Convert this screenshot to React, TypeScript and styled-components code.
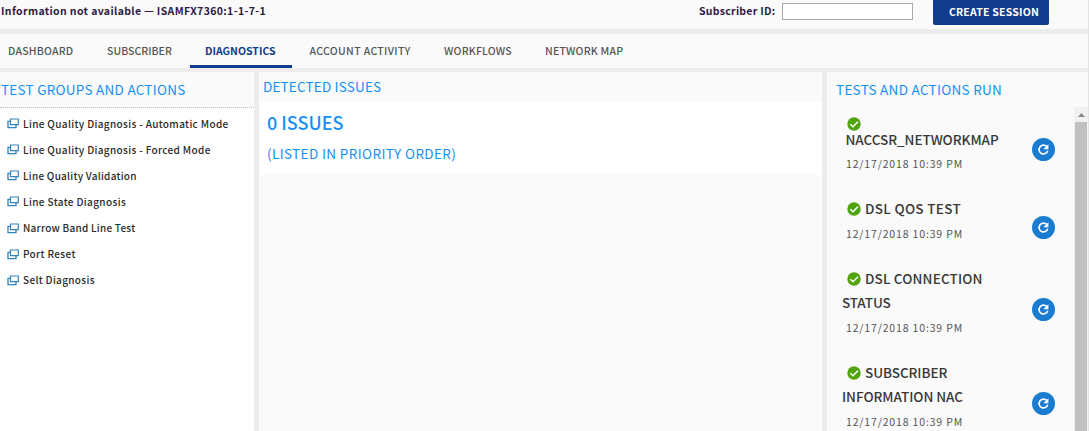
import React from "react";
import styled, { createGlobalStyle, css } from "styled-components";

const FONT = `"Noto Sans CJK SC", "Noto Sans", sans-serif`;

const GlobalStyle = createGlobalStyle`
  * { box-sizing: border-box; }
  html, body { margin: 0; height: 100%; overflow: hidden; }
  body {
    background: #ececec;
    font-family: ${FONT};
    white-space: nowrap;
  }
`;

const Page = styled.div`
  display: flex;
  flex-direction: column;
  width: 1089px;
  height: 431px;
  overflow: hidden;
  background: #ececec;
  border-right: 1px solid #e4e4e4;
`;

const TopBar = styled.header`
  display: flex;
  flex: none;
  height: 29px;
  margin-bottom: 5px;
  background: #fafafa;
`;

const barText = css`
  color: #2e1a47;
  font-size: 10.5px;
  font-weight: 700;
  line-height: 16px;
  margin-top: 3px;
`;

const LineInfo = styled.div`
  ${barText}
  width: 699px;
  padding-left: 1px;
  letter-spacing: 0.36px;
`;

const FieldLabel = styled.label`
  ${barText}
  width: 83px;
  letter-spacing: 0.27px;
`;

const Field = styled.input`
  width: 131px;
  height: 17px;
  margin: 3px 20px 0 0;
  padding: 0 4px;
  border: 1px solid #a9a9a9;
  background: #fff;
`;

const SessionButton = styled.button`
  width: 116px;
  height: 25px;
  padding: 0 0 1px 6px;
  border: 0;
  border-radius: 0 0 2px 2px;
  background: #113b8d;
  color: #fff;
  font: 700 10.5px/24px ${FONT};
  letter-spacing: 0.22px;
`;

const Tabs = styled.nav`
  display: flex;
  flex: none;
  height: 34px;
  margin-bottom: 4px;
  background: #fafafa;
`;

const Tab = styled.a<{ $width: number; $left: number; $spacing: number; $active?: boolean }>`
  width: ${(p) => p.$width}px;
  height: 34px;
  padding: 9px 0 0 ${(p) => p.$left}px;
  border-bottom: 3px solid ${(p) => (p.$active ? "#113b8d" : "transparent")};
  color: ${(p) => (p.$active ? "#113b8d" : "#555")};
  font-size: 10.5px;
  font-weight: ${(p) => (p.$active ? 700 : 500)};
  line-height: 16px;
  letter-spacing: ${(p) => p.$spacing}px;
`;

const Columns = styled.main`
  display: flex;
  flex: 1;
  gap: 5px;
  min-height: 0;
`;

const Panel = styled.section<{ $width: number; $white?: boolean }>`
  display: flex;
  flex-direction: column;
  flex: none;
  width: ${(p) => p.$width}px;
  background: ${(p) => (p.$white ? "#fff" : "#fafafa")};
  overflow: hidden;
`;

const PanelTitle = styled.h2<{ $height: number; $left: number; $spacing: number; $dotted?: boolean }>`
  flex: none;
  height: ${(p) => p.$height}px;
  margin: 0;
  padding-left: ${(p) => p.$left}px;
  background: #fafafa;
  border-bottom: ${(p) => (p.$dotted ? "1px dotted #c4c0b4" : "0")};
  color: #158ff8;
  font-size: 13.5px;
  font-weight: 400;
  line-height: ${(p) => p.$height - 1}px;
  letter-spacing: ${(p) => p.$spacing}px;
`;

const TestList = styled.ul`
  list-style: none;
  margin: 0;
  padding: 2px 0 0 7px;
`;

const TestItem = styled.li<{ $spacing: number }>`
  display: flex;
  align-items: center;
  gap: 4px;
  height: 26.15px;
  color: #2a2a2a;
  font-size: 10px;
  font-weight: 500;
  letter-spacing: ${(p) => p.$spacing}px;
`;

const IssueBox = styled.div`
  height: 73px;
  padding: 7px 0 0 8px;
  background: #fff;
  color: #158ff8;
`;

const IssueCount = styled.div`
  font-size: 18px;
  font-weight: 500;
  line-height: 27px;
`;

const IssueNote = styled.div`
  margin-top: 7px;
  font-size: 13.5px;
  line-height: 20px;
  letter-spacing: 0.38px;
`;

const RunArea = styled.div`
  display: flex;
  flex: 1;
  min-height: 0;
`;

const RunList = styled.div`
  width: 247px;
  overflow: hidden;
`;

const Run = styled.article<{ $height: number; $top?: number }>`
  display: flex;
  height: ${(p) => p.$height}px;
  padding-top: ${(p) => p.$top ?? 0}px;
`;

const RunText = styled.div`
  width: 205px;
  padding-left: 15px;
`;

const RunName = styled.div<{ $spacing: number; $tight?: boolean; $indent?: number }>`
  display: flex;
  align-items: center;
  gap: 4px;
  height: ${(p) => (p.$tight ? 17 : 24.5)}px;
  padding-left: ${(p) => p.$indent ?? 0}px;
  color: #383838;
  font-size: 13.5px;
  font-weight: 500;
  line-height: 17px;
  letter-spacing: ${(p) => p.$spacing}px;

  span {
    padding-bottom: 2px;
  }
`;

const RunTime = styled.div<{ $gap?: number }>`
  height: 24px;
  margin-top: ${(p) => p.$gap ?? 0}px;
  padding-left: 4px;
  color: #555;
  font-size: 10.5px;
  line-height: 24px;
  letter-spacing: 0.85px;
`;

const RerunButton = styled.button<{ $top: number }>`
  width: 23px;
  height: 23px;
  margin-top: ${(p) => p.$top}px;
  padding: 0;
  border: 0;
  border-radius: 50%;
  background: #1a7bd0;
  line-height: 0;
`;

const Scrollbar = styled.div`
  display: flex;
  flex-direction: column;
  width: 14px;
  padding-left: 1px;
  background: #f1f1f1;
`;

const ScrollArrow = styled.div`
  display: flex;
  align-items: center;
  justify-content: center;
  height: 15px;
  width: 12px;
`;

const ScrollThumb = styled.div`
  flex: 1;
  width: 12px;
  background: #c1c1c1;
`;

const WindowIcon = () => (
  <svg width="12" height="12" viewBox="0 0 12 12" fill="none" stroke="#3383bd">
    <path d="M3.5 2h7.8v5.7H3.5z" strokeWidth="1.2" />
    <path d="M3.2 4.3H1v6.4h8V8" strokeWidth="1.3" />
  </svg>
);

const CheckIcon = () => (
  <svg width="14" height="14" viewBox="0 0 14 14">
    <circle cx="7" cy="7" r="6.7" fill="#51a30b" />
    <path d="M3.3 7.3 6 9.8l4.9-5" fill="none" stroke="#fff" strokeWidth="1.5" />
  </svg>
);

const RerunIcon = () => (
  <svg width="23" height="23" viewBox="0 0 23 23" fill="none">
    <path d="M14.6 8.4A4.4 4.4 0 1 0 15.7 12.7" stroke="#fff" strokeWidth="1.6" />
    <path d="M16.4 6.3v5h-5z" fill="#fff" />
  </svg>
);

const tabs = [
  { label: "DASHBOARD", width: 92, left: 8, spacing: 0.2 },
  { label: "SUBSCRIBER", width: 98, left: 15, spacing: 0.05 },
  { label: "DIAGNOSTICS", width: 102, left: 15, spacing: 0 },
  { label: "ACCOUNT ACTIVITY", width: 137, left: 17.5, spacing: 0.35 },
  { label: "WORKFLOWS", width: 101, left: 15, spacing: 0.2 },
  { label: "NETWORK MAP", width: 112, left: 15, spacing: 0.2 },
];

const tests = [
  { label: "Line Quality Diagnosis - Automatic Mode", spacing: 0.35 },
  { label: "Line Quality Diagnosis - Forced Mode", spacing: 0.35 },
  { label: "Line Quality Validation", spacing: 0.25 },
  { label: "Line State Diagnosis", spacing: 0.37 },
  { label: "Narrow Band Line Test", spacing: 0.25 },
  { label: "Port Reset", spacing: 0.37 },
  { label: "Selt Diagnosis", spacing: 0.33 },
];

const RUN_TIME = "12/17/2018 10:39 PM";

export default function App() {
  return (
    <>
      <GlobalStyle />
      <Page>
        <TopBar>
          <LineInfo>Information not available — ISAMFX7360:1-1-7-1</LineInfo>
          <FieldLabel htmlFor="subscriber">Subscriber ID:</FieldLabel>
          <Field id="subscriber" />
          <SessionButton>CREATE SESSION</SessionButton>
        </TopBar>
        <Tabs>
          {tabs.map((t) => (
            <Tab
              key={t.label}
              $width={t.width}
              $left={t.left}
              $spacing={t.spacing}
              $active={t.label === "DIAGNOSTICS"}
            >
              {t.label}
            </Tab>
          ))}
        </Tabs>
        <Columns>
          <Panel $width={254} $white>
            <PanelTitle $height={36} $left={1} $spacing={0.26} $dotted>
              TEST GROUPS AND ACTIONS
            </PanelTitle>
            <TestList>
              {tests.map((t) => (
                <TestItem key={t.label} $spacing={t.spacing}>
                  <WindowIcon />
                  <span>{t.label}</span>
                </TestItem>
              ))}
            </TestList>
          </Panel>
          <Panel $width={563}>
            <PanelTitle $height={30} $left={4} $spacing={0.18}>
              DETECTED ISSUES
            </PanelTitle>
            <IssueBox>
              <IssueCount>0 ISSUES</IssueCount>
              <IssueNote>(LISTED IN PRIORITY ORDER)</IssueNote>
            </IssueBox>
          </Panel>
          <Panel $width={261}>
            <PanelTitle $height={35} $left={9} $spacing={0.29}>
              TESTS AND ACTIONS RUN
            </PanelTitle>
            <RunArea>
              <RunList>
                <Run $height={90} $top={8}>
                  <RunText>
                    <RunName $spacing={0} $tight $indent={5}>
                      <CheckIcon />
                    </RunName>
                    <RunName $spacing={-0.05} $tight $indent={3.5}>
                      <span>NACCSR_NETWORKMAP</span>
                    </RunName>
                    <RunTime $gap={3}>{RUN_TIME}</RunTime>
                  </RunText>
                  <RerunButton $top={23} aria-label="Run again"><RerunIcon /></RerunButton>
                </Run>
                <Run $height={70}>
                  <RunText>
                    <RunName $spacing={0.3} $indent={5}><CheckIcon /><span>DSL QOS TEST</span></RunName>
                    <RunTime>{RUN_TIME}</RunTime>
                  </RunText>
                  <RerunButton $top={19} aria-label="Run again"><RerunIcon /></RerunButton>
                </Run>
                <Run $height={94}>
                  <RunText>
                    <RunName $spacing={0.15} $indent={5}><CheckIcon /><span>DSL CONNECTION</span></RunName>
                    <RunName $spacing={-0.1}><span>STATUS</span></RunName>
                    <RunTime>{RUN_TIME}</RunTime>
                  </RunText>
                  <RerunButton $top={31} aria-label="Run again"><RerunIcon /></RerunButton>
                </Run>
                <Run $height={94}>
                  <RunText>
                    <RunName $spacing={-0.05} $indent={5}><CheckIcon /><span>SUBSCRIBER</span></RunName>
                    <RunName $spacing={-0.05}><span>INFORMATION NAC</span></RunName>
                    <RunTime>{RUN_TIME}</RunTime>
                  </RunText>
                  <RerunButton $top={31} aria-label="Run again"><RerunIcon /></RerunButton>
                </Run>
              </RunList>
              <Scrollbar>
                <ScrollArrow>
                  <svg width="7" height="4" viewBox="0 0 7 4"><path d="M0 4 3.5 0 7 4z" fill="#8a8a8a" /></svg>
                </ScrollArrow>
                <ScrollThumb />
              </Scrollbar>
            </RunArea>
          </Panel>
        </Columns>
      </Page>
    </>
  );
}
